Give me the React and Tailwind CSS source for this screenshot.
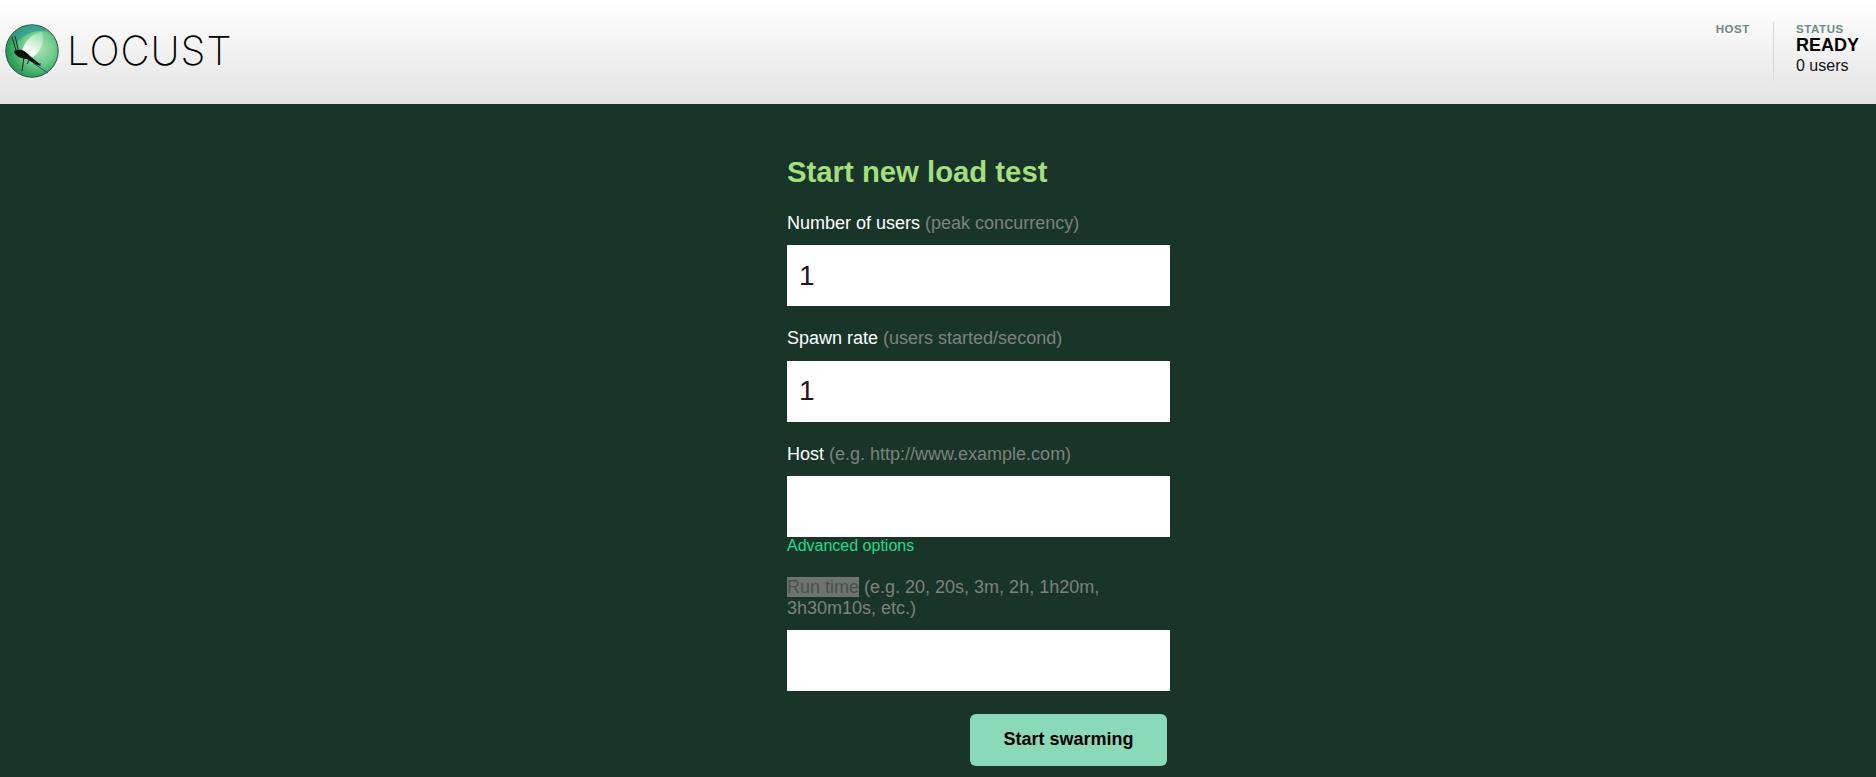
import React from 'react';

const LocustLogo = () => (
  <svg width="54" height="54" viewBox="0 0 54 54" className="shrink-0">
    <defs>
      <radialGradient id="ball" cx="0.62" cy="0.45" r="0.7">
        <stop offset="0" stopColor="#a8e4b6" />
        <stop offset="0.45" stopColor="#6fcb8c" />
        <stop offset="0.75" stopColor="#35a45c" />
        <stop offset="1" stopColor="#1f8a4e" />
      </radialGradient>
      <linearGradient id="wing" x1="0.8" y1="0" x2="0.2" y2="1">
        <stop offset="0" stopColor="#c4eccd" stopOpacity="0.5" />
        <stop offset="0.7" stopColor="#f4fbf5" />
        <stop offset="1" stopColor="#ffffff" />
      </linearGradient>
    </defs>
    <circle cx="27" cy="27" r="26.2" fill="url(#ball)" stroke="#24504a" strokeWidth="1" />
    <path d="M7 12 A25 25 0 0 1 44 8 A32 32 0 0 0 12 18 Z" fill="#2f9a94" opacity="0.75" />
    <path d="M17 27 C19 18 27 9 37 8 C40 16 36 28 28 33 C24 32 20 30 17 27 Z" fill="url(#wing)" />
    <path d="M9 28 C10 25 14 25 17 26 C20 27 23 30 26 33 C30 36 34 39 36 42 C31 41 26 38 22 35 C18 35 11 33 9 28 Z" fill="#0b1512" />
    <path d="M11 26 L7 13 M13 25 L10 12 M19 33 L17 47 M24 36 L22 40 M30 40 L36 40" stroke="#0b1512" strokeWidth="0.9" fill="none" />
    <path d="M28 39 L43 49" stroke="#1c4f8c" strokeWidth="1" fill="none" />
  </svg>
);

const Field = ({ label, hint, value, highlight }) => (
  <div className="flex flex-col">
    <label className="text-[18px] leading-[20.5px] mb-[12px]">
      {highlight ? (
        <span className="bg-[#6c756f] text-[#4b4f4c]">{label}</span>
      ) : (
        <span className="text-white">{label}</span>
      )}
      <span className="text-[#7d827f]"> {hint}</span>
    </label>
    <input
      type="text"
      defaultValue={value}
      className="w-full h-[61px] bg-white pl-[12px] pr-3 text-[28px] text-[#2a1214] outline-none"
    />
  </div>
);

export default function App() {
  return (
    <div className="h-[777px] overflow-hidden bg-[#19352a] font-['Liberation_Sans',Arial,sans-serif]">
      {/* Header */}
      <header className="h-[104px] bg-gradient-to-b from-white to-[#e4e4e4] flex justify-between pl-[5px]">
        <div className="flex items-center gap-[8px] h-[102px]">
          <LocustLogo />
          <span className="text-[40px] leading-none font-extralight tracking-[1px] text-black font-['Inter',sans-serif]">LOCUST</span>
        </div>
        <div className="flex pt-[22px]">
          <div className="h-[59px] pr-[23px] text-[11.5px] leading-[14px] font-bold tracking-[0.6px] text-[#6b8a85]">HOST</div>
          <div className="h-[59px] border-l border-[#d3dbd8] pl-[22px] w-[103px]">
            <div className="text-[11.5px] leading-[14px] font-bold tracking-[0.6px] text-[#6b8a85]">STATUS</div>
            <div className="text-[18px] leading-[18px] font-bold text-black">READY</div>
            <div className="text-[16px] leading-[20px] mt-[2px] text-[#111]">0 users</div>
          </div>
        </div>
      </header>

      {/* Form */}
      <main className="w-[383px] ml-[787px]">
        <h2 className="pt-[52px] text-[29.3px] leading-[32px] font-bold text-[#a6de7f] mb-[24.5px]">Start new load test</h2>
        <div className="flex flex-col gap-[22px]">
          <Field label="Number of users" hint="(peak concurrency)" value="1" />
          <Field label="Spawn rate" hint="(users started/second)" value="1" />
          <div className="flex flex-col">
            <Field label="Host" hint="(e.g. http://www.example.com)" value="" />
            <a className="text-[16px] leading-[17px] text-[#1fdc8a]">Advanced options</a>
          </div>
        </div>
        <div className="mt-[23px]">
          <Field label="Run time" hint="(e.g. 20, 20s, 3m, 2h, 1h20m, 3h30m10s, etc.)" value="" highlight />
        </div>
        <div className="flex justify-end pr-[3px] mt-[23px]">
          <button className="w-[197px] h-[52px] pb-[2px] rounded-[6px] bg-[#8bdab7] text-black text-[18px] font-bold">Start swarming</button>
        </div>
      </main>
    </div>
  );
}
